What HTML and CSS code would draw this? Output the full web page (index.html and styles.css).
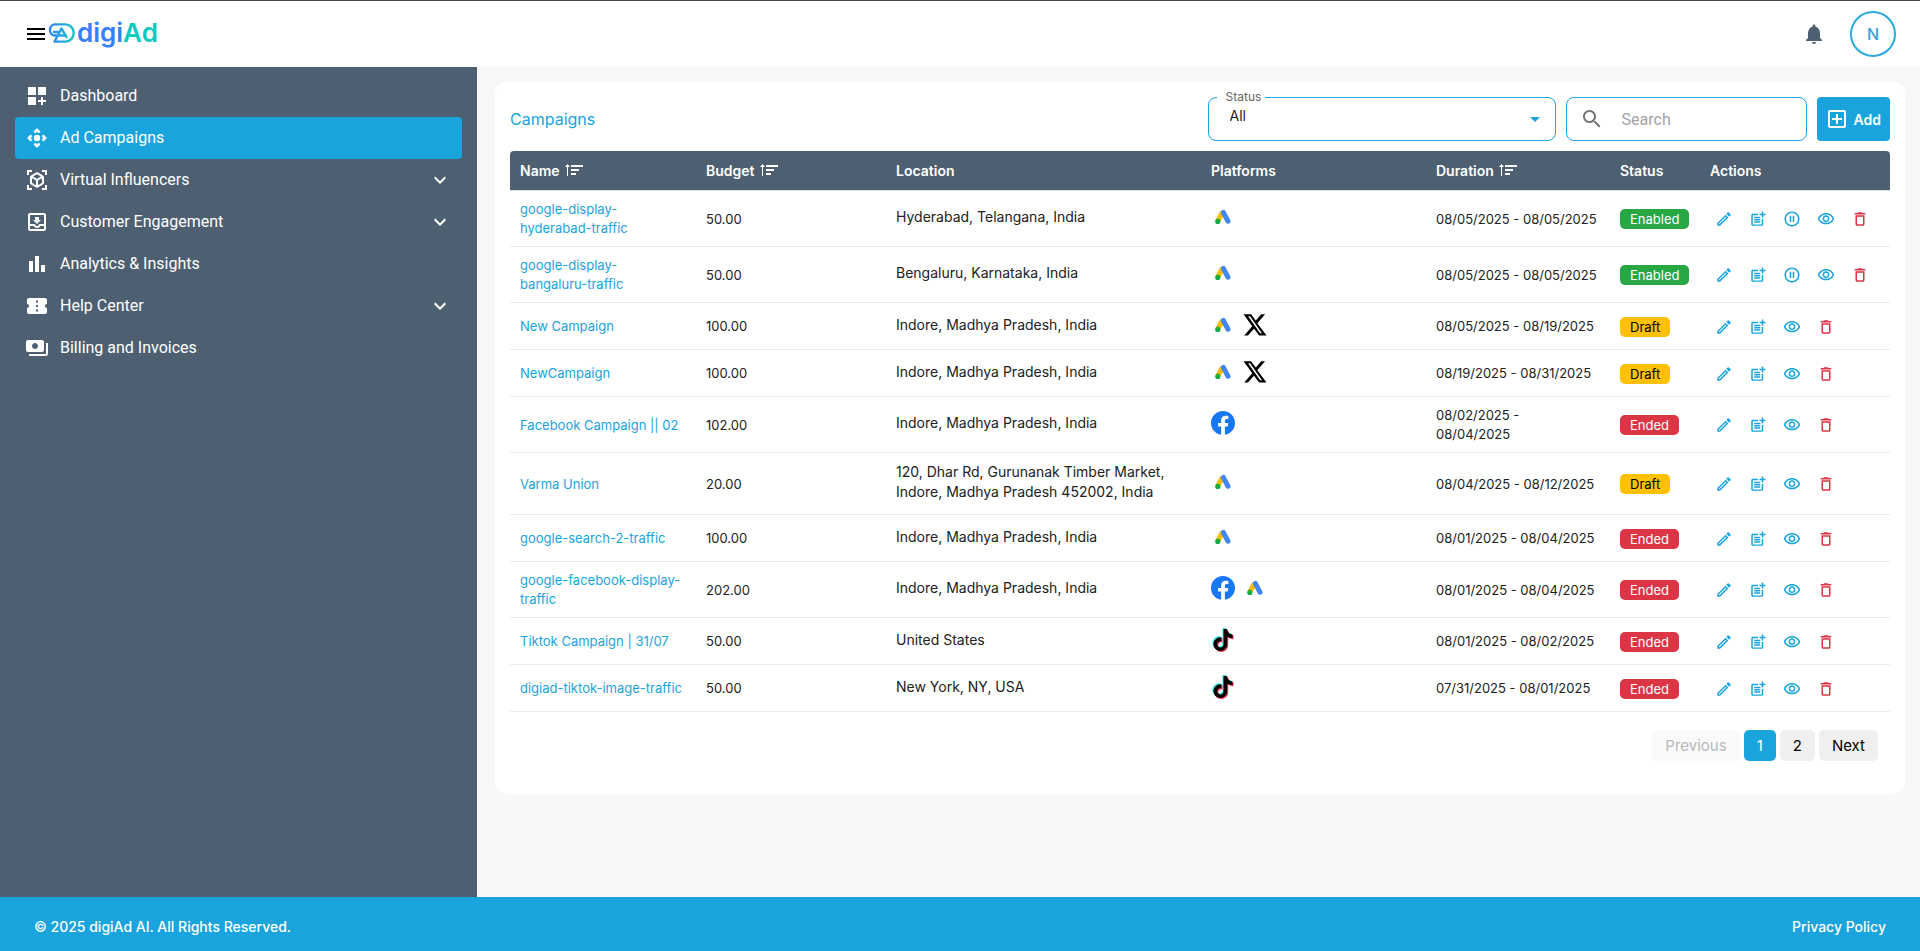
FILE: index.html
```html
<!DOCTYPE html>
<html lang="en">
<head>
  <meta charset="UTF-8">
  <meta name="viewport" content="width=device-width, initial-scale=1">
  <title>digiAd - Campaigns</title>
  <link rel="stylesheet" href="styles.css">
</head>
<body>
  <!-- Icon sprite -->
  <svg class="sprite" aria-hidden="true">
    <symbol id="i-menu" viewBox="0 0 24 24"><path d="M3 18h18v-2H3zm0-5h18v-2H3zm0-7v2h18V6z"/></symbol>
    <symbol id="i-bell" viewBox="0 0 24 24"><path d="M12 22c1.1 0 2-.9 2-2h-4c0 1.100.89 2 2 2zm6-6v-5c0-3.070-1.640-5.640-4.500-6.320V4c0-.83-.67-1.500-1.500-1.500s-1.500.67-1.500 1.500v.68C7.630 5.360 6 7.920 6 11v5l-2 2v1h16v-1z"/></symbol>
    <symbol id="i-dashboard" viewBox="0 0 24 24"><path d="M3 3h8v8H3zm10 0h8v8h-8zM3 13h8v8H3zm15 0h-2v3h-3v2h3v3h2v-3h3v-2h-3z"/></symbol>
    <symbol id="i-campaign" viewBox="0 0 24 24"><path stroke="currentColor" stroke-width=".7" stroke-linejoin="round" d="M15.200 5.540L13.770 6.900 12 5.540 10.230 6.900 8.800 5.540 12 2.500zm3.260 9.660l-1.360-1.430L18.460 12l-1.360-1.770 1.360-1.430L21.500 12zm-9.660 3.260l1.430-1.360L12 18.460l1.770-1.360 1.430 1.360L12 21.500zM5.540 8.800l1.360 1.430L5.540 12l1.360 1.770-1.360 1.430L2.500 12z"/><circle cx="12" cy="12" r="3.200"/></symbol>
    <symbol id="i-ar" viewBox="0 0 24 24"><path fill="none" stroke="currentColor" stroke-width="2" d="M3 7V3h4M17 3h4v4M21 17v4h-4M7 21H3v-4"/><path d="M19 14.870V9.130c0-.72-.38-1.380-1-1.730l-5-2.880c-.31-.18-.65-.27-1-.27s-.69.09-1 .27L6 7.390c-.62.36-1 1.020-1 1.740v5.740c0 .72.38 1.380 1 1.730l5 2.880c.31.18.65.27 1 .27s.69-.09 1-.27l5-2.880c.62-.35 1-1.010 1-1.730zm-8 2.300l-4-2.300v-4.630l4 2.330zm1-6.330L8.040 8.530 12 6.250l3.960 2.280zm5 4.030l-4 2.300v-4.600l4-2.330z"/></symbol>
    <symbol id="i-inbox" viewBox="0 0 24 24"><path d="M19 3H5c-1.100 0-2 .9-2 2v14c0 1.100.9 2 2 2h14c1.100 0 2-.9 2-2V5c0-1.100-.9-2-2-2zm0 16H5v-3h3.560c.69 1.190 1.970 2 3.450 2s2.750-.81 3.450-2H19zm0-5h-5c0 1.100-.9 2-2 2s-2-.9-2-2H5V5h14zm-3-4h-2V7h-4v3H8l4 4z"/></symbol>
    <symbol id="i-chart" viewBox="0 0 24 24"><path d="M4 9h4v11H4zm12 4h4v7h-4zm-6-9h4v16h-4z"/></symbol>
    <symbol id="i-ticket" viewBox="0 0 24 24"><path d="M22 10V6c0-1.110-.9-2-2-2H4c-1.100 0-2 .89-2 2v4c1.100 0 2 .9 2 2s-.9 2-2 2v4c0 1.100.9 2 2 2h16c1.100 0 2-.9 2-2v-4c-1.100 0-2-.9-2-2s.9-2 2-2zm-9 7.500h-2v-2h2zm0-4.500h-2v-2h2zm0-4.500h-2v-2h2z"/></symbol>
    <symbol id="i-billing" viewBox="0 0 24 24"><path d="M19 14V6c0-1.100-.9-2-2-2H3c-1.100 0-2 .9-2 2v8c0 1.100.9 2 2 2h14c1.100 0 2-.9 2-2zm-9-1c-1.660 0-3-1.340-3-3s1.340-3 3-3 3 1.340 3 3-1.340 3-3 3zm13-6v11c0 1.100-.9 2-2 2H4v-2h17V7z"/></symbol>
    <symbol id="i-chevron" viewBox="0 0 24 24"><path d="M16.590 8.590L12 13.170 7.410 8.590 6 10l6 6 6-6z"/></symbol>
    <symbol id="i-search" viewBox="0 0 24 24"><path d="M15.500 14h-.79l-.28-.27C15.410 12.590 16 11.110 16 9.500 16 5.910 13.090 3 9.500 3S3 5.910 3 9.500 5.910 16 9.500 16c1.610 0 3.090-.59 4.230-1.570l.27.28v.79l5 4.990L20.490 19zm-6 0C7.010 14 5 11.990 5 9.500S7.010 5 9.500 5 14 7.010 14 9.500 11.990 14 9.500 14z"/></symbol>
    <symbol id="i-add" viewBox="0 0 24 24"><path d="M19 3H5c-1.110 0-2 .9-2 2v14c0 1.100.89 2 2 2h14c1.100 0 2-.9 2-2V5c0-1.100-.9-2-2-2zm0 16H5V5h14zm-8-2h2v-4h4v-2h-4V7h-2v4H7v2h4z"/></symbol>
    <symbol id="i-sort" viewBox="0 0 18 12"><path d="M2 12V3H0L2.500 0 5 3H3v9zM6 1h12v2H6zM6 5h8v2H6zM6 9h5v2H6z"/></symbol>
    <symbol id="i-edit" viewBox="0 0 24 24"><path d="M14.060 9.020l.92.92L5.920 19H5v-.92zM17.660 3c-.25 0-.51.1-.7.29l-1.830 1.830 3.750 3.750 1.830-1.830c.39-.39.39-1.020 0-1.410l-2.340-2.340c-.2-.2-.45-.29-.71-.29zm-3.600 3.190L3 17.250V21h3.750L17.810 9.940z"/></symbol>
    <symbol id="i-post" viewBox="0 0 24 24"><path d="M17 19.220H5V7h7V5H5c-1.100 0-2 .9-2 2v12c0 1.100.9 2 2 2h12c1.100 0 2-.9 2-2v-7h-2zM19 2h-2v3h-3v2h3v3h2V7h3V5h-3zM7 9h8v2H7zM7 12h8v2H7zM7 15h8v2H7z"/></symbol>
    <symbol id="i-pause" viewBox="0 0 24 24"><path d="M9 16h2V8H9zm3-14C6.480 2 2 6.480 2 12s4.480 10 10 10 10-4.480 10-10S17.520 2 12 2zm0 18c-4.410 0-8-3.590-8-8s3.590-8 8-8 8 3.590 8 8-3.590 8-8 8zm1-4h2V8h-2z"/></symbol>
    <symbol id="i-view" viewBox="0 0 24 24"><path d="M12 6c3.790 0 7.170 2.130 8.820 5.500C19.170 14.870 15.790 17 12 17s-7.170-2.130-8.820-5.500C4.830 8.130 8.210 6 12 6m0-2C7 4 2.730 7.110 1 11.500 2.730 15.890 7 19 12 19s9.270-3.110 11-7.500C21.270 7.110 17 4 12 4zm0 5c1.380 0 2.500 1.120 2.500 2.500S13.380 14 12 14s-2.500-1.120-2.500-2.500S10.620 9 12 9m0-2c-2.480 0-4.500 2.020-4.500 4.500S9.520 16 12 16s4.500-2.020 4.500-4.500S14.480 7 12 7z"/></symbol>
    <symbol id="i-delete" viewBox="0 0 24 24"><path d="M6 19c0 1.100.9 2 2 2h8c1.100 0 2-.9 2-2V7H6zM8 9h8v10H8zm7.500-5l-1-1h-5l-1 1H5v2h14V4z"/></symbol>
    <symbol id="p-google" viewBox="0 0 24 24"><path stroke="#fbbc04" stroke-width="5" d="M11.400 7.500L6.800 16"/><path stroke="#4285f4" stroke-width="5" stroke-linecap="round" d="M12.300 7.400L17 16.200"/><circle cx="6.800" cy="16.400" r="2.600" fill="#12ab45"/></symbol>
    <symbol id="p-x" viewBox="0 0 24 24"><path d="M18.244 1.250h3.808l-7.727 9.010 9.202 12.240H16.170l-5.214-6.817L4.990 22.500H1.180l8.030-9.335L.554 1.250H8.080l4.713 6.231zm-1.161 19.020h1.833L7.084 3.326H5.117z"/></symbol>
    <symbol id="p-facebook" viewBox="0 0 24 24"><circle cx="12" cy="12" r="11" fill="#fff"/><path fill="#1877f2" d="M24 12c0-6.627-5.373-12-12-12S0 5.373 0 12c0 5.990 4.388 10.954 10.125 11.854v-8.385H7.078V12h3.047V9.360c0-3.007 1.792-4.669 4.533-4.669 1.312 0 2.686.235 2.686.235v2.953H15.830c-1.491 0-1.956.925-1.956 1.874V12h3.328l-.532 3.469h-2.796v8.385C19.612 22.954 24 17.990 24 12z"/></symbol>
    <symbol id="p-note" viewBox="0 0 24 24"><path d="M12.525.02c1.310-.02 2.610-.01 3.910-.02.08 1.530.63 3.090 1.750 4.170 1.120 1.110 2.700 1.620 4.240 1.790v4.030c-1.440-.05-2.890-.35-4.200-.97-.57-.26-1.100-.59-1.620-.93-.01 2.920.01 5.840-.02 8.750-.08 1.400-.54 2.790-1.350 3.940-1.310 1.920-3.580 3.170-5.910 3.210-1.430.08-2.860-.31-4.080-1.030-2.020-1.190-3.440-3.370-3.650-5.710-.02-.5-.03-1-.01-1.490.18-1.900 1.120-3.720 2.580-4.960 1.660-1.440 3.980-2.130 6.150-1.720.02 1.480-.04 2.960-.04 4.440-.99-.32-2.150-.23-3.020.37-.63.41-1.110 1.040-1.360 1.750-.21.51-.15 1.070-.14 1.610.24 1.640 1.820 3.020 3.500 2.870 1.120-.01 2.190-.66 2.770-1.610.19-.33.4-.67.41-1.060.1-1.790.06-3.570.07-5.360.01-4.030-.01-8.050.02-12.070z"/></symbol>
    <symbol id="p-tiktok" viewBox="0 0 24 24"><use href="#p-note" x="0" y="0" width="22" height="22" fill="#25f4ee"/><use href="#p-note" x="2" y="2" width="22" height="22" fill="#fe2c55"/><use href="#p-note" x="1" y="1" width="22" height="22" fill="#000"/></symbol>
  </svg>

  <header class="topbar">
    <div class="brand">
      <button class="icon-btn" aria-label="Menu"><svg class="icon"><use href="#i-menu"/></svg></button>
      <a class="logo" href="#">
        <svg class="logo-mark" viewBox="0 0 27 20" aria-hidden="true">
          <defs>
            <linearGradient id="mark" gradientUnits="userSpaceOnUse" x1="0" y1="0" x2="27" y2="0"><stop offset="0" stop-color="#2f80ff"/><stop offset="1" stop-color="#17c8c0"/></linearGradient>
          </defs>
          <g fill="none" stroke="url(#mark)" stroke-width="2.400" stroke-linejoin="round" stroke-linecap="round">
            <path d="M8 12.500H6.500A5.200 5.600 0 0 1 6.500 1.400H17.500a8.200 8.600 0 0 1 0 17.200H6.500L13.500 5.500l5 8.500"/>
            <path d="M6 9h4M11.500 12.500h6"/>
          </g>
        </svg>
        <span class="logo-text">digi<span class="logo-ad">Ad</span></span>
      </a>
    </div>
    <div class="user">
      <button class="icon-btn bell" aria-label="Notifications"><svg class="icon"><use href="#i-bell"/></svg></button>
      <button class="avatar">N</button>
    </div>
  </header>

  <div class="layout">
    <nav class="sidebar">
      <a class="nav-item" href="#"><svg class="icon"><use href="#i-dashboard"/></svg><span>Dashboard</span></a>
      <a class="nav-item active" href="#"><svg class="icon"><use href="#i-campaign"/></svg><span>Ad Campaigns</span></a>
      <a class="nav-item" href="#"><svg class="icon"><use href="#i-ar"/></svg><span>Virtual Influencers</span><svg class="icon chevron"><use href="#i-chevron"/></svg></a>
      <a class="nav-item" href="#"><svg class="icon"><use href="#i-inbox"/></svg><span>Customer Engagement</span><svg class="icon chevron"><use href="#i-chevron"/></svg></a>
      <a class="nav-item" href="#"><svg class="icon"><use href="#i-chart"/></svg><span>Analytics &amp; Insights</span></a>
      <a class="nav-item" href="#"><svg class="icon"><use href="#i-ticket"/></svg><span>Help Center</span><svg class="icon chevron"><use href="#i-chevron"/></svg></a>
      <a class="nav-item" href="#"><svg class="icon"><use href="#i-billing"/></svg><span>Billing and Invoices</span></a>
    </nav>

    <main class="content">
      <section class="card">
        <div class="toolbar">
          <h1 class="title">Campaigns</h1>
          <div class="field">
            <label for="status">Status</label>
            <select id="status">
              <option>All</option>
              <option>Enabled</option>
              <option>Draft</option>
              <option>Ended</option>
            </select>
          </div>
          <div class="search">
            <svg class="icon"><use href="#i-search"/></svg>
            <input type="text" placeholder="Search" aria-label="Search">
          </div>
          <button class="add-btn"><svg class="icon"><use href="#i-add"/></svg>Add</button>
        </div>

        <table class="campaigns">
          <colgroup>
            <col class="c-name"><col class="c-budget"><col class="c-location"><col class="c-platforms"><col class="c-duration"><col class="c-status"><col class="c-actions">
          </colgroup>
          <thead>
            <tr>
              <th>Name <svg class="sort"><use href="#i-sort"/></svg></th>
              <th>Budget <svg class="sort"><use href="#i-sort"/></svg></th>
              <th>Location</th>
              <th>Platforms</th>
              <th>Duration <svg class="sort"><use href="#i-sort"/></svg></th>
              <th>Status</th>
              <th>Actions</th>
            </tr>
          </thead>
          <tbody>
            <tr>
              <td><a href="#">google-display-<br>hyderabad-traffic</a></td>
              <td>50.00</td>
              <td><p class="location">Hyderabad, Telangana, India</p></td>
              <td><div class="platforms"><svg><use href="#p-google"/></svg></div></td>
              <td>08/05/2025 - 08/05/2025</td>
              <td><span class="badge enabled">Enabled</span></td>
              <td><div class="actions">
                <button aria-label="Edit"><svg><use href="#i-edit"/></svg></button>
                <button aria-label="Duplicate"><svg><use href="#i-post"/></svg></button>
                <button aria-label="Pause"><svg><use href="#i-pause"/></svg></button>
                <button aria-label="View"><svg><use href="#i-view"/></svg></button>
                <button class="delete" aria-label="Delete"><svg><use href="#i-delete"/></svg></button>
              </div></td>
            </tr>
            <tr>
              <td><a href="#">google-display-<br>bangaluru-traffic</a></td>
              <td>50.00</td>
              <td><p class="location">Bengaluru, Karnataka, India</p></td>
              <td><div class="platforms"><svg><use href="#p-google"/></svg></div></td>
              <td>08/05/2025 - 08/05/2025</td>
              <td><span class="badge enabled">Enabled</span></td>
              <td><div class="actions">
                <button aria-label="Edit"><svg><use href="#i-edit"/></svg></button>
                <button aria-label="Duplicate"><svg><use href="#i-post"/></svg></button>
                <button aria-label="Pause"><svg><use href="#i-pause"/></svg></button>
                <button aria-label="View"><svg><use href="#i-view"/></svg></button>
                <button class="delete" aria-label="Delete"><svg><use href="#i-delete"/></svg></button>
              </div></td>
            </tr>
            <tr>
              <td><a href="#">New Campaign</a></td>
              <td>100.00</td>
              <td><p class="location">Indore, Madhya Pradesh, India</p></td>
              <td><div class="platforms"><svg><use href="#p-google"/></svg><svg><use href="#p-x"/></svg></div></td>
              <td>08/05/2025 - 08/19/2025</td>
              <td><span class="badge draft">Draft</span></td>
              <td><div class="actions">
                <button aria-label="Edit"><svg><use href="#i-edit"/></svg></button>
                <button aria-label="Duplicate"><svg><use href="#i-post"/></svg></button>
                <button aria-label="View"><svg><use href="#i-view"/></svg></button>
                <button class="delete" aria-label="Delete"><svg><use href="#i-delete"/></svg></button>
              </div></td>
            </tr>
            <tr>
              <td><a href="#">NewCampaign</a></td>
              <td>100.00</td>
              <td><p class="location">Indore, Madhya Pradesh, India</p></td>
              <td><div class="platforms"><svg><use href="#p-google"/></svg><svg><use href="#p-x"/></svg></div></td>
              <td>08/19/2025 - 08/31/2025</td>
              <td><span class="badge draft">Draft</span></td>
              <td><div class="actions">
                <button aria-label="Edit"><svg><use href="#i-edit"/></svg></button>
                <button aria-label="Duplicate"><svg><use href="#i-post"/></svg></button>
                <button aria-label="View"><svg><use href="#i-view"/></svg></button>
                <button class="delete" aria-label="Delete"><svg><use href="#i-delete"/></svg></button>
              </div></td>
            </tr>
            <tr>
              <td><a href="#">Facebook Campaign || 02</a></td>
              <td>102.00</td>
              <td><p class="location">Indore, Madhya Pradesh, India</p></td>
              <td><div class="platforms"><svg><use href="#p-facebook"/></svg></div></td>
              <td>08/02/2025 -<br>08/04/2025</td>
              <td><span class="badge ended">Ended</span></td>
              <td><div class="actions">
                <button aria-label="Edit"><svg><use href="#i-edit"/></svg></button>
                <button aria-label="Duplicate"><svg><use href="#i-post"/></svg></button>
                <button aria-label="View"><svg><use href="#i-view"/></svg></button>
                <button class="delete" aria-label="Delete"><svg><use href="#i-delete"/></svg></button>
              </div></td>
            </tr>
            <tr>
              <td><a href="#">Varma Union</a></td>
              <td>20.00</td>
              <td><p class="location">120, Dhar Rd, Gurunanak Timber Market, Indore, Madhya Pradesh 452002, India</p></td>
              <td><div class="platforms"><svg><use href="#p-google"/></svg></div></td>
              <td>08/04/2025 - 08/12/2025</td>
              <td><span class="badge draft">Draft</span></td>
              <td><div class="actions">
                <button aria-label="Edit"><svg><use href="#i-edit"/></svg></button>
                <button aria-label="Duplicate"><svg><use href="#i-post"/></svg></button>
                <button aria-label="View"><svg><use href="#i-view"/></svg></button>
                <button class="delete" aria-label="Delete"><svg><use href="#i-delete"/></svg></button>
              </div></td>
            </tr>
            <tr>
              <td><a href="#">google-search-2-traffic</a></td>
              <td>100.00</td>
              <td><p class="location">Indore, Madhya Pradesh, India</p></td>
              <td><div class="platforms"><svg><use href="#p-google"/></svg></div></td>
              <td>08/01/2025 - 08/04/2025</td>
              <td><span class="badge ended">Ended</span></td>
              <td><div class="actions">
                <button aria-label="Edit"><svg><use href="#i-edit"/></svg></button>
                <button aria-label="Duplicate"><svg><use href="#i-post"/></svg></button>
                <button aria-label="View"><svg><use href="#i-view"/></svg></button>
                <button class="delete" aria-label="Delete"><svg><use href="#i-delete"/></svg></button>
              </div></td>
            </tr>
            <tr>
              <td><a href="#">google-facebook-display-traffic</a></td>
              <td>202.00</td>
              <td><p class="location">Indore, Madhya Pradesh, India</p></td>
              <td><div class="platforms"><svg><use href="#p-facebook"/></svg><svg><use href="#p-google"/></svg></div></td>
              <td>08/01/2025 - 08/04/2025</td>
              <td><span class="badge ended">Ended</span></td>
              <td><div class="actions">
                <button aria-label="Edit"><svg><use href="#i-edit"/></svg></button>
                <button aria-label="Duplicate"><svg><use href="#i-post"/></svg></button>
                <button aria-label="View"><svg><use href="#i-view"/></svg></button>
                <button class="delete" aria-label="Delete"><svg><use href="#i-delete"/></svg></button>
              </div></td>
            </tr>
            <tr>
              <td><a href="#">Tiktok Campaign | 31/07</a></td>
              <td>50.00</td>
              <td><p class="location">United States</p></td>
              <td><div class="platforms"><svg><use href="#p-tiktok"/></svg></div></td>
              <td>08/01/2025 - 08/02/2025</td>
              <td><span class="badge ended">Ended</span></td>
              <td><div class="actions">
                <button aria-label="Edit"><svg><use href="#i-edit"/></svg></button>
                <button aria-label="Duplicate"><svg><use href="#i-post"/></svg></button>
                <button aria-label="View"><svg><use href="#i-view"/></svg></button>
                <button class="delete" aria-label="Delete"><svg><use href="#i-delete"/></svg></button>
              </div></td>
            </tr>
            <tr>
              <td><a href="#">digiad-tiktok-image-traffic</a></td>
              <td>50.00</td>
              <td><p class="location">New York, NY, USA</p></td>
              <td><div class="platforms"><svg><use href="#p-tiktok"/></svg></div></td>
              <td>07/31/2025 - 08/01/2025</td>
              <td><span class="badge ended">Ended</span></td>
              <td><div class="actions">
                <button aria-label="Edit"><svg><use href="#i-edit"/></svg></button>
                <button aria-label="Duplicate"><svg><use href="#i-post"/></svg></button>
                <button aria-label="View"><svg><use href="#i-view"/></svg></button>
                <button class="delete" aria-label="Delete"><svg><use href="#i-delete"/></svg></button>
              </div></td>
            </tr>
          </tbody>
        </table>

        <div class="pagination">
          <button disabled>Previous</button>
          <button class="current">1</button>
          <button>2</button>
          <button>Next</button>
        </div>
      </section>
    </main>
  </div>

  <footer class="footer">
    <span>© 2025 digiAd AI. All Rights Reserved.</span>
    <a href="#">Privacy Policy</a>
  </footer>
</body>
</html>
```
FILE: styles.css
```css
* {
  box-sizing: border-box;
}

body {
  margin: 0;
  min-height: 100vh;
  display: flex;
  flex-direction: column;
  font-family: Inter, sans-serif;
  font-size: 14px;
  color: #212121;
  background: #f8f8f8;
}

a {
  color: inherit;
  text-decoration: none;
}

button {
  font-family: inherit;
  border: none;
  padding: 0;
  cursor: pointer;
}

.sprite {
  display: none;
}

.icon {
  width: 24px;
  height: 24px;
  fill: currentColor;
  flex: none;
}

/* Header */
.topbar {
  display: flex;
  justify-content: space-between;
  align-items: center;
  height: 67px;
  padding: 0 24px;
  background: #fff;
  border-top: 1px solid #444;
}

.brand,
.user,
.logo {
  display: flex;
  align-items: center;
}

.logo {
  padding-bottom: 3px;
}

.icon-btn {
  display: flex;
  background: none;
  color: #000;
}

.logo-mark {
  width: 27px;
  height: 20px;
  margin-right: 2px;
}

.logo-text {
  font-size: 26px;
  line-height: 30px;
  font-weight: 600;
  color: #3481fb;
}

.logo-ad {
  color: #06cbc0;
}

.user {
  gap: 24px;
}

.bell {
  color: #4d5f70;
}

.avatar {
  width: 46px;
  height: 46px;
  border: 2px solid #29abe2;
  border-radius: 50%;
  background: #fff;
  color: #3a9fd6;
  font-size: 16px;
  font-weight: 500;
}

/* Sidebar */
.layout {
  display: flex;
  flex: 1;
}

.sidebar {
  flex: 0 0 477px;
  padding: 8px 15px;
  background: #4d5f70;
}

.nav-item {
  display: flex;
  align-items: center;
  gap: 11px;
  height: 42px;
  padding: 0 10px;
  border-radius: 4px;
  color: #fff;
  font-family: Roboto, sans-serif;
  font-size: 16px;
}

.nav-item.active {
  background: #19a4de;
}

.nav-item span {
  padding-bottom: 1px;
}

.chevron {
  margin-left: auto;
}

/* Campaigns card */
.content {
  flex: 1;
  min-width: 0;
  padding: 15px 15px 15px 18px;
}

.card {
  padding: 15px 15px 33px;
  background: #fff;
  border-radius: 12px;
}

.toolbar {
  display: flex;
  align-items: center;
  gap: 10px;
  margin-bottom: 10px;
}

.title {
  margin: 0 auto 0 0;
  font-size: 16px;
  font-weight: 400;
  color: #19a4de;
}

.field {
  position: relative;
  width: 348px;
}

.field label {
  position: absolute;
  top: -8px;
  left: 9px;
  padding: 0 4px 0 9px;
  background: #fff;
  color: #666;
  font-size: 12px;
  line-height: 16px;
}

.field::after {
  content: "";
  position: absolute;
  right: 16px;
  top: 20px;
  border: 5px solid transparent;
  border-top-color: #19a4de;
  border-bottom: none;
  pointer-events: none;
}

.field select {
  display: block;
  width: 100%;
  height: 44px;
  padding: 0 20px 7px 21px;
  border: 1px solid #19a4de;
  border-radius: 8px;
  background: #fff;
  color: #212121;
  font-family: inherit;
  font-size: 14px;
  appearance: none;
}

.search {
  display: flex;
  align-items: center;
  gap: 18px;
  width: 241px;
  height: 44px;
  padding: 0 13px;
  border: 1px solid #19a4de;
  border-radius: 8px;
  color: #757575;
}

.search input {
  flex: 1;
  min-width: 0;
  padding: 0;
  border: none;
  outline: none;
  font-family: Roboto, sans-serif;
  font-size: 16px;
}

.search input::placeholder {
  color: #a3a3a3;
}

.add-btn {
  display: flex;
  align-items: center;
  gap: 5px;
  height: 44px;
  padding: 0 9px 0 8px;
  border-radius: 4px;
  background: #19a4de;
  color: #fff;
  font-size: 14px;
  font-weight: 600;
}

/* Table */
.campaigns {
  width: 100%;
  table-layout: fixed;
  border-spacing: 0;
  font-size: 13px;
  line-height: 19px;
}

.c-name { width: 186px; }
.c-budget { width: 190px; }
.c-location { width: 315px; }
.c-platforms { width: 225px; }
.c-duration { width: 184px; }
.c-status { width: 90px; }
.c-actions { width: 190px; }

.campaigns th {
  height: 40px;
  padding: 0 10px;
  background: #4d5f70;
  border-bottom: 1px solid #e0e0e0;
  color: #fff;
  font-size: 14px;
  font-weight: 600;
  text-align: left;
}

.campaigns th:first-child {
  border-top-left-radius: 4px;
}

.campaigns th:last-child {
  border-top-right-radius: 4px;
}

.sort {
  width: 18px;
  height: 12px;
  margin-left: 2px;
  fill: #fff;
}

.campaigns td {
  height: 47px;
  padding: 9px 10px 8px;
  border-bottom: 1px solid #ebebeb;
  vertical-align: middle;
}

.campaigns td a {
  color: #19a4de;
}

.location {
  margin: 0 0 4px;
  font-size: 14px;
  line-height: 20px;
}

.platforms {
  display: flex;
  gap: 8px;
  margin-bottom: 4px;
}

.platforms svg {
  width: 24px;
  height: 24px;
}

.badge {
  display: inline-block;
  padding: 0 10px;
  border-radius: 5px;
  line-height: 20px;
  vertical-align: middle;
}

.enabled {
  background: #28a745;
  color: #fff;
}

.draft {
  background: #ffc107;
  color: #000;
}

.ended {
  background: #dc3545;
  color: #fff;
}

.actions {
  display: flex;
  gap: 6px;
}

.actions button {
  display: flex;
  align-items: center;
  justify-content: center;
  width: 28px;
  height: 28px;
  background: none;
  color: #19a4de;
}

.actions .delete {
  color: #dc3545;
}

.actions svg {
  width: 18px;
  height: 18px;
  fill: currentColor;
}

/* Pagination */
.pagination {
  display: flex;
  justify-content: flex-end;
  gap: 4px;
  padding: 18px 12px 0;
}

.pagination button {
  height: 31px;
  padding: 0 13px;
  border-radius: 5px;
  background: #efefef;
  color: #000;
  font-size: 15px;
}

.pagination button:disabled {
  background: #fafafa;
  color: #b8b8b8;
}

.pagination .current {
  background: #19a4de;
  color: #fff;
}

/* Footer */
.footer {
  display: flex;
  justify-content: space-between;
  align-items: center;
  height: 54px;
  padding: 4px 34px 0;
  background: #19a4de;
  color: #fff;
  font-weight: 500;
}
```
